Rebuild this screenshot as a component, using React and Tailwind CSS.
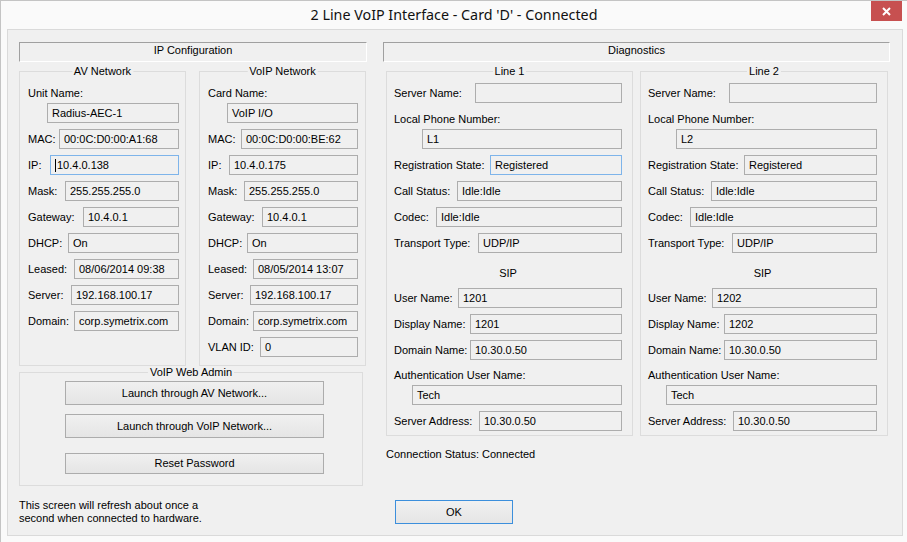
import React from "react";

function Field({ children, focus = false, className = "" }) {
  return (
    <div
      className={`h-[20px] flex items-center pl-[4px] whitespace-nowrap overflow-hidden border ${
        focus ? "border-[#7eb4ea]" : "border-[#adadad]"
      } bg-[#f0f0f0] ${className}`}
    >
      {children}
    </div>
  );
}

function Row({ label, lw, value, focus }) {
  return (
    <div className="flex items-center h-[20px]">
      <div className={`${lw} shrink-0 whitespace-nowrap`}>{label}</div>
      <Field focus={focus} className="flex-1">
        {value}
      </Field>
    </div>
  );
}

function StackRow({ label, indent, value, slot = "h-[20px]" }) {
  return (
    <div className="flex flex-col">
      <div className={`${slot} flex items-center whitespace-nowrap`}>{label}</div>
      <Field className={indent}>{value}</Field>
    </div>
  );
}

function Group({ title, className = "", children }) {
  return (
    <div className={`relative border border-[#dcdcdc] ${className}`}>
      <span className="absolute top-[-7px] left-1/2 -translate-x-1/2 bg-[#f0f0f0] px-[2px] leading-[13px] whitespace-nowrap">
        {title}
      </span>
      {children}
    </div>
  );
}

function Header({ children }) {
  return (
    <div className="h-[20px] pb-[3px] border border-t-[#a0a0a0] border-l-[#a0a0a0] border-r-white border-b-white flex items-center justify-center">
      {children}
    </div>
  );
}

function Btn({ children, className = "" }) {
  return (
    <div
      className={`flex items-center justify-center border border-[#acacac] bg-gradient-to-b from-[#f0f0f0] to-[#e5e5e5] ${className}`}
    >
      {children}
    </div>
  );
}

function LinePanel({ title, n, focusReg }) {
  return (
    <Group title={title} className={`${n === 1 ? "w-[247px]" : "w-[248px]"} h-[365px]`}>
      <div className="pt-[11px] pl-[7px] pr-[10px] flex flex-col gap-[6px]">
        <Row label="Server Name:" lw="w-[81px]" value="" />
        <StackRow label="Local Phone Number:" indent="ml-[28px]" value={n === 1 ? "L1" : "L2"} />
        <Row label="Registration State:" lw="w-[96px]" value="Registered" focus={focusReg} />
        <Row label="Call Status:" lw="w-[63px]" value="Idle:Idle" />
        <Row label="Codec:" lw="w-[42px]" value="Idle:Idle" />
        <Row label="Transport Type:" lw="w-[84px]" value="UDP/IP" />
        <div className="h-[19px] mt-[4px] pt-[2px] flex items-center justify-center">SIP</div>
        <Row label="User Name:" lw="w-[64px]" value={n === 1 ? "1201" : "1202"} />
        <Row label="Display Name:" lw="w-[76px]" value={n === 1 ? "1201" : "1202"} />
        <Row label="Domain Name:" lw="w-[76px]" value="10.30.0.50" />
        <StackRow label="Authentication User Name:" indent="ml-[18px]" value="Tech" slot="h-[19px]" />
        <Row label="Server Address:" lw="w-[85px]" value="10.30.0.50" />
      </div>
    </Group>
  );
}

export default function App() {
  return (
    <div className="w-[907px] h-[542px] bg-[#fafafa] border-l border-t border-[#c4c4c4] font-['Liberation_Sans',Arial,sans-serif] text-[11px] leading-[13px] text-black flex flex-col overflow-hidden">
      {/* Title bar */}
      <div className="h-[28px] grid grid-cols-[1fr_auto_1fr] shrink-0">
        <div />
        <div className="pt-[4px] font-['Noto_Sans',sans-serif] text-[14.3px] leading-[20px] text-[#111] whitespace-nowrap">
          2 Line VoIP Interface - Card 'D' - Connected
        </div>
        <div className="flex justify-end items-start">
          <div className="mr-[5px] w-[31px] h-[20px] bg-[#c75050] flex items-center justify-center">
            <svg width="9" height="9" viewBox="0 0 9 9">
              <path d="M1 1 L8 8 M8 1 L1 8" stroke="white" strokeWidth="2" />
            </svg>
          </div>
        </div>
      </div>

      {/* Client area */}
      <div className="ml-[6px] w-[896px] h-[507px] border border-[#dadada] bg-[#f0f0f0] pt-[12px] pl-[11px] flex gap-[16px] shrink-0">
        {/* Left column */}
        <div className="w-[348px] flex flex-col">
          <Header>IP Configuration</Header>
          <div className="mt-[9px] flex gap-[13px]">
            <Group title="AV Network" className="w-[167px] h-[295px]">
              <div className="pt-[11px] pl-[8px] pr-[6px] flex flex-col gap-[6px]">
                <StackRow label="Unit Name:" indent="ml-[19px]" value="Radius-AEC-1" />
                <Row label="MAC:" lw="w-[31px]" value="00:0C:D0:00:A1:68" />
                <Row label="IP:" lw="w-[22px]" value={<><span className="w-px h-[13px] bg-black mr-[1px]" />10.4.0.138</>} focus />
                <Row label="Mask:" lw="w-[37px]" value="255.255.255.0" />
                <Row label="Gateway:" lw="w-[55px]" value="10.4.0.1" />
                <Row label="DHCP:" lw="w-[40px]" value="On" />
                <Row label="Leased:" lw="w-[46px]" value="08/06/2014 09:38" />
                <Row label="Server:" lw="w-[43px]" value="192.168.100.17" />
                <Row label="Domain:" lw="w-[46px]" value="corp.symetrix.com" />
              </div>
            </Group>
            <Group title="VoIP Network" className="w-[167px] h-[295px]">
              <div className="pt-[11px] pl-[8px] pr-[7px] flex flex-col gap-[6px]">
                <StackRow label="Card Name:" indent="ml-[19px]" value="VoIP I/O" />
                <Row label="MAC:" lw="w-[33px]" value="00:0C:D0:00:BE:62" />
                <Row label="IP:" lw="w-[21px]" value="10.4.0.175" />
                <Row label="Mask:" lw="w-[36px]" value="255.255.255.0" />
                <Row label="Gateway:" lw="w-[54px]" value="10.4.0.1" />
                <Row label="DHCP:" lw="w-[39px]" value="On" />
                <Row label="Leased:" lw="w-[45px]" value="08/05/2014 13:07" />
                <Row label="Server:" lw="w-[42px]" value="192.168.100.17" />
                <Row label="Domain:" lw="w-[45px]" value="corp.symetrix.com" />
                <Row label="VLAN ID:" lw="w-[52px]" value="0" />
              </div>
            </Group>
          </div>
          <Group title="VoIP Web Admin" className="mt-[6px] w-[344px] h-[114px]">
            <div className="pt-[8px] pl-[45px] flex flex-col">
              <Btn className="w-[259px] h-[24px]">Launch through AV Network...</Btn>
              <Btn className="mt-[9px] w-[259px] h-[24px]">Launch through VoIP Network...</Btn>
              <Btn className="mt-[15px] w-[259px] h-[21px]">Reset Password</Btn>
            </div>
          </Group>
          <div className="mt-[13px]">
            This screen will refresh about once a
            <br />
            second when connected to hardware.
          </div>
        </div>

        {/* Right column */}
        <div className="w-[507px] flex flex-col">
          <Header>Diagnostics</Header>
          <div className="mt-[9px] pl-[3px] flex gap-[7px]">
            <LinePanel title="Line 1" n={1} focusReg />
            <LinePanel title="Line 2" n={2} />
          </div>
          <div className="mt-[12px] pl-[3px]">Connection Status: Connected</div>
          <Btn className="mt-[39px] ml-[12px] w-[118px] h-[24px] !border-[#3c8fdc] from-[#f1f1f1] to-[#e3e3e3]">
            OK
          </Btn>
        </div>
      </div>
    </div>
  );
}
